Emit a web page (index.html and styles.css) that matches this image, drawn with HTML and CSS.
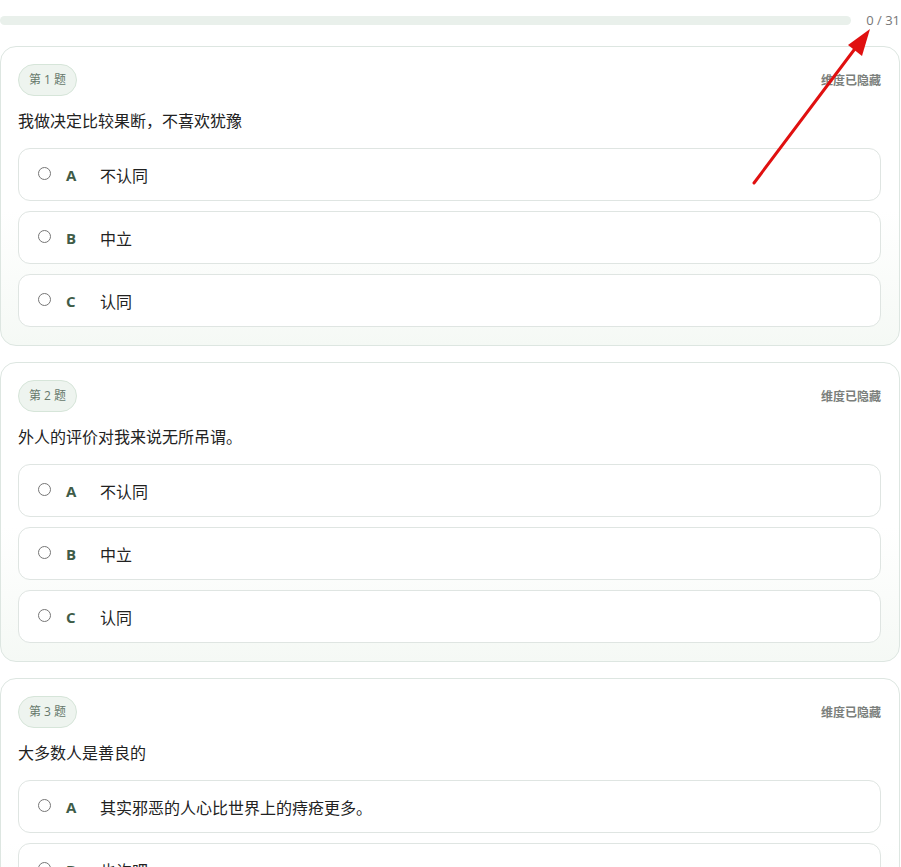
FILE: index.html
```html
<!DOCTYPE html>
<html lang="zh-CN">
<head>
  <meta charset="UTF-8" />
  <meta name="viewport" content="width=device-width, initial-scale=1.0"/>
  <title>测评答题</title>
  <link rel="stylesheet" href="styles.css">
</head>
<body>

  <!-- Progress -->
  <div class="progress-row">
    <div class="progress-track"><div class="progress-fill"></div></div>
    <div class="progress-text">0 / 31</div>
  </div>

  <div class="question-list">

    <div class="question-card">
      <div class="question-head">
        <span class="question-tag">第 1 题</span>
        <span class="dimension">维度已隐藏</span>
      </div>
      <div class="question-text">我做决定比较果断，不喜欢犹豫</div>
      <div class="options">
        <label class="option"><span class="radio"></span><span class="letter">A</span><span class="option-text">不认同</span></label>
        <label class="option"><span class="radio"></span><span class="letter">B</span><span class="option-text">中立</span></label>
        <label class="option"><span class="radio"></span><span class="letter">C</span><span class="option-text">认同</span></label>
      </div>
    </div>

    <div class="question-card">
      <div class="question-head">
        <span class="question-tag">第 2 题</span>
        <span class="dimension">维度已隐藏</span>
      </div>
      <div class="question-text">外人的评价对我来说无所吊谓。</div>
      <div class="options">
        <label class="option"><span class="radio"></span><span class="letter">A</span><span class="option-text">不认同</span></label>
        <label class="option"><span class="radio"></span><span class="letter">B</span><span class="option-text">中立</span></label>
        <label class="option"><span class="radio"></span><span class="letter">C</span><span class="option-text">认同</span></label>
      </div>
    </div>

    <div class="question-card">
      <div class="question-head">
        <span class="question-tag">第 3 题</span>
        <span class="dimension">维度已隐藏</span>
      </div>
      <div class="question-text">大多数人是善良的</div>
      <div class="options">
        <label class="option"><span class="radio"></span><span class="letter">A</span><span class="option-text">其实邪恶的人心比世界上的痔疮更多。</span></label>
        <label class="option"><span class="radio"></span><span class="letter">B</span><span class="option-text">也许吧</span></label>
        <label class="option"><span class="radio"></span><span class="letter">C</span><span class="option-text">认同</span></label>
      </div>
    </div>

  </div>

  <!-- annotation arrow -->
  <svg class="annotation" width="901" height="867" viewBox="0 0 901 867">
    <line x1="754" y1="183" x2="857" y2="46" stroke="#e01010" stroke-width="3" stroke-linecap="round"/>
    <polygon points="870,29 862,56 848,45" fill="#e01010"/>
  </svg>

</body>
</html>
```

FILE: styles.css
```css
body {
  font-family: "Open Sans", "Noto Sans CJK SC", sans-serif;
  background-color: #ffffff;
  color: #222;
  margin: 0;
  padding: 0;
  overflow: hidden;
}

.progress-row {
  display: flex;
  align-items: center;
  gap: 15px;
  padding: 15px 1px 0 0;
  height: 10px;
}

.progress-track {
  flex: 1;
  height: 9px;
  background-color: #e9f0eb;
  border-radius: 5px;
  overflow: hidden;
}

.progress-fill {
  width: 0;
  height: 100%;
  background-color: #4c7a5a;
}

.progress-text {
  font-size: 13px;
  color: #777;
}

.question-list {
  display: flex;
  flex-direction: column;
  gap: 16px;
  margin-top: 21px;
  padding-right: 1px;
}

.question-card {
  background: linear-gradient(180deg, #ffffff 0%, #ffffff 55%, #f5f9f5 100%);
  border: 1px solid #dde6e1;
  border-radius: 16px;
  padding: 17px 18px 18px 17px;
}

.question-head {
  display: flex;
  justify-content: space-between;
  align-items: center;
}

.question-tag {
  display: inline-block;
  height: 30px;
  line-height: 30px;
  padding: 0 10px;
  background-color: #eef4ef;
  border: 1px solid #d6e5d9;
  border-radius: 16px;
  font-size: 12px;
  color: #66786b;
}

.dimension {
  font-size: 12px;
  font-weight: 600;
  color: #7b7f7c;
}

.question-text {
  font-size: 16px;
  line-height: 22px;
  margin: 14px 0 16px 0;
  color: #222;
}

.options {
  display: flex;
  flex-direction: column;
  gap: 10px;
}

.option {
  display: flex;
  align-items: center;
  height: 51px;
  padding: 0 19px;
  border: 1px solid #dfe5e2;
  border-radius: 12px;
  background-color: #fff;
  cursor: pointer;
}

.radio {
  width: 11px;
  height: 11px;
  border: 1px solid #767676;
  border-radius: 50%;
  margin-top: -3px;
  margin-right: 15px;
}

.letter {
  width: 34px;
  font-size: 15px;
  font-weight: 700;
  color: #3f5c48;
}

.option-text {
  font-size: 16px;
  color: #222;
}

.annotation {
  position: absolute;
  top: 0;
  left: 0;
  pointer-events: none;
}
```
